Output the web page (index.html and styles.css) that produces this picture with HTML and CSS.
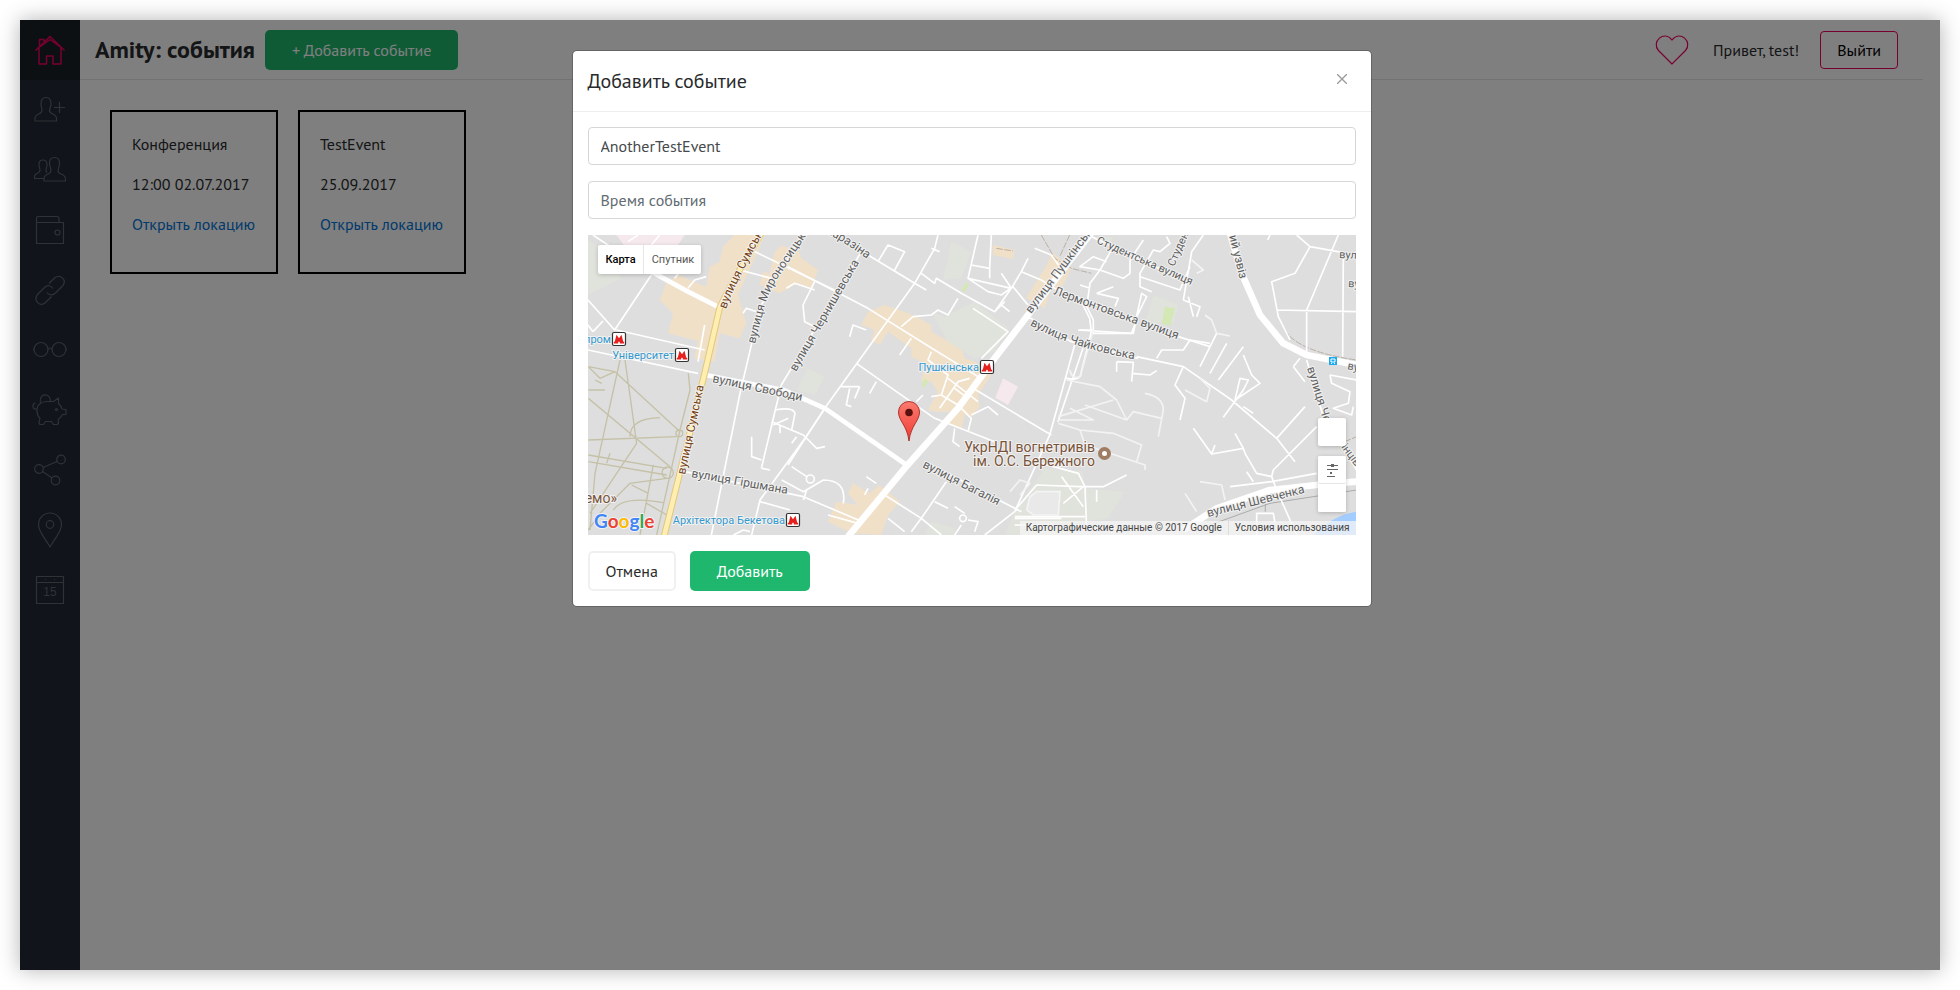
FILE: index.html
```html
<!DOCTYPE html>
<html lang="ru">
<head>
<meta charset="utf-8">
<title>Amity: события</title>
<link rel="stylesheet" href="styles.css">
</head>
<body>
<div class="app">
  <nav class="sidebar" aria-label="Разделы">
    <a class="nav-item active" href="#" aria-label="Главная"><svg class="icon" viewBox="0 0 32 32"><path d="M1.500 16.500 16 2.500l14.500 14M5 13.500V30h7.500v-8h6.500v8H27V13.500L16 5.500zM5.500 12.500V5.500h4.500v3"/></svg></a>
    <a class="nav-item" href="#" aria-label="Добавить друга"><svg class="icon" viewBox="0 0 32 32"><path d="M7 10c0-5 2-6.500 5-6.500S17 5 17 10c0 3-1.500 4-1.500 6.500 0 4.500 7 2.500 7 8V27H1v-2.500c0-5.500 7-3.500 7-8C8 14 7 13 7 10zM20 13.500h11M25.500 8v11"/></svg></a>
    <a class="nav-item" href="#" aria-label="Друзья"><svg class="icon" viewBox="0 0 32 32"><path d="M15.500 9c0-4 2-5.500 5-5.500s5 1.500 5 5.500-1.500 5-1.500 8c0 4 7.500 2 7.500 8v2H10v-2c0-6 7-4 7-8 0-3-1.500-4-1.500-8zM10 24.500H.5v-2c0-4 5.500-2.500 5.500-6 0-2-1-3-1-6C5 7 6.500 6 9 6s4 1 4 4.500c0 3-1 4-1 6 0 1 .5 1.700 1.200 2.200"/></svg></a>
    <a class="nav-item" href="#" aria-label="Кошелёк"><svg class="icon" viewBox="0 0 32 32"><path d="M2.500 8.500h27v21h-27V4.500q0-2 2-2H23q2 0 2 2v4"/><circle cx="23.500" cy="18.500" r="2.500"/></svg></a>
    <a class="nav-item" href="#" aria-label="Ссылки"><svg class="icon" viewBox="0 0 32 32"><path d="m15 9.500 5.500-5.500c5.500-5 13 2 8 8l-7 7c-3 3-7 2-8.500-.5M17.500 22.500l-6 6c-5.500 5-12.500-2-8-8l7-7c3-3 6.500-2 8.500 1"/></svg></a>
    <a class="nav-item" href="#" aria-label="Обзор"><svg class="icon wide" viewBox="0 0 36 32"><circle cx="9" cy="15.500" r="7"/><circle cx="27" cy="15.500" r="7"/><path d="M16 15.500q2-3 4 0M1 15.500h1M34 15.500h1"/></svg></a>
    <a class="nav-item" href="#" aria-label="Копилка"><svg class="icon wide" viewBox="0 0 36 32"><path d="M8.500 8.500C6.500-1.500 19-1.500 18.500 7.500M4.500 15c-5 1-4-6-1-6M5 17C4.500 11 9 7.500 15 7.500h6.500L26.500 4v5.500q3 2.500 3.500 5.500l4 .5v5h-3.500q-2 3.500-4 4.500c-1 2 1.500 5-1.500 5.500h-3.500l-2-3h-6l-2 3H8c-2-1-.5-3.500 0-6Q5 21.500 5 17z"/><circle cx="24.500" cy="15.500" r="1"/></svg></a>
    <a class="nav-item" href="#" aria-label="Поделиться"><svg class="icon" viewBox="0 0 32 32"><circle cx="5" cy="15" r="4.300"/><circle cx="27" cy="5.500" r="4.300"/><circle cx="21.500" cy="26.500" r="4.300"/><path d="m9 13.500 14-6M8.500 17.500l9.500 6.500"/></svg></a>
    <a class="nav-item" href="#" aria-label="Места"><svg class="icon tall" viewBox="0 0 32 36"><path d="M16 35C10 24 4.500 20 4.500 12.500a11.500 11.500 0 0 1 23 0C27.500 20 22 24 16 35z"/><circle cx="16" cy="12.500" r="3.800"/></svg></a>
    <a class="nav-item" href="#" aria-label="События"><svg class="icon" viewBox="0 0 32 32"><path d="M2.500 2.500h27v27h-27zM2.500 8.500h27M11 5.500h1M20 5.500h1"/><text class="icon-day" x="16" y="22" text-anchor="middle">15</text></svg></a>
  </nav>
  <div class="content">
    <header class="topbar">
      <h1 class="brand">Amity: события</h1>
      <button class="btn btn-green" type="button">+ Добавить событие</button>
      <div class="account">
        <svg class="heart" viewBox="0 0 34 31" aria-hidden="true"><path d="M17 30 3.500 16.500C-4 8 9-4.500 17 6 25-4.500 38 8 30.500 16.500z"/></svg>
        <span class="greeting">Привет, test!</span>
        <button class="btn btn-logout" type="button">Выйти</button>
      </div>
    </header>
    <main class="events">
      <article class="event"><p>Конференция</p><p>12:00 02.07.2017</p><p><a href="#">Открыть локацию</a></p></article>
      <article class="event"><p>TestEvent</p><p>25.09.2017</p><p><a href="#">Открыть локацию</a></p></article>
    </main>
  </div>

  <div class="backdrop">
    <section class="modal" role="dialog" aria-labelledby="modal-title">
      <header class="modal-head">
        <h2 id="modal-title">Добавить событие</h2>
        <button class="close" type="button" aria-label="Закрыть"><svg viewBox="0 0 10 10"><path d="M0 0 10 10M10 0 0 10"/></svg></button>
      </header>
      <form class="modal-body">
        <input class="field" type="text" aria-label="Название события" value="AnotherTestEvent">
        <input class="field" type="text" aria-label="Время события" placeholder="Время события">
        <div class="map">
          <svg class="map-canvas" viewBox="0 0 768 300" preserveAspectRatio="xMidYMid slice" role="img" aria-label="Карта">
            <defs>
              <g id="metro"><rect x="-6.500" y="-6.500" width="13" height="13" rx="1.500" fill="#fff" stroke="#333" stroke-width="1.200"/><path d="M-5.200 4.500V3l1-.5L-2.500-4.200 0-.8 2.500-4.200 4.200 2.500l1 .5v1.500H.8V3.200L0 2.500l-.8.7v1.300z" fill="#e5211f"/></g>
              <path id="st-mironosytska" d="M167 109 176 74Q181 55 192 40L228-14"/>
              <path id="st-chaikovska" d="M442 90Q480 112 550 125"/>
              <path id="st-karazina" d="M190-22Q240-6 279 24"/>
              <path id="st-sumska" d="M138 74Q148 45 190-28"/>
              <linearGradient id="pin" x1="0" y1="0" x2="0" y2="1"><stop offset="0" stop-color="#fb7a6f"/><stop offset="1" stop-color="#f03c34"/></linearGradient>
            </defs>
            <rect width="768" height="300" fill="#dedede"/>
            <g transform="scale(.33333)">
              <g class="commercial">
                <path d="M440 0H530L500 70 450 180 475 265 455 310 395 295 380 380 320 370 330 318 240 295 255 235 215 195 235 145 270 120 355 155 365 95 395 80 405 35zM560 50 580 32 610 40 625 25 640 70 690 105 670 160 630 145 575 175 515 150 525 110 545 115z"/>
                <path transform="translate(600)" d="M240 230 290 210 375 240 430 270 430 290 520 340 530 370 560 380 610 420 570 480 575 515 550 545 530 540 520 582 480 565 490 530 440 530 420 525 450 470 430 440 400 440 410 385 370 365 370 340 300 290 275 330 250 315 260 285 220 270zM615 30 680 45 675 72 615 60zM790 50 850 100 815 170 790 160 770 220 715 190 745 140 780 85zM195 745 245 775 275 750 335 800 300 840 280 900 190 895 120 860 145 800 210 810 180 775z"/>
              </g>
              <g class="park">
                <path d="M0 15 40 40 100 130 0 180z"/>
                <path transform="translate(600)" d="M490 20 550 50 520 130 465 135zM430 230 470 245 560 200 660 280 620 350 560 370 480 320zM60 400 110 425 80 480 25 465zM770 700 885 710 890 760 1010 770 960 850 890 860 820 900H650L680 830zM430 860 500 880 500 900H410z"/>
                <path transform="translate(1146 -585)" d="M550 765 625 795 610 850 525 850zM375 590 430 590 425 605 370 600z"/>
              </g>
              <path class="hospital" d="M85 0H290L240 75 130 60zM1245 430 1290 455 1260 510 1222 488z"/>
              <path class="grass" d="M1120 165 1135 140 1142 152 1128 172zM1000 450 1010 430 1022 438 1008 458zM1731 215 1761 220 1746 273 1721 265z"/>
              <path class="water" d="M2176 900Q2236 840 2306 830V900z"/>
              <path class="rail" d="M1866 870 2046 805 2306 765M2032 792V830"/>
              <g class="footway" transform="translate(-54 285)">
                <path d="M55 110 135 125 330 305M150 90 75 430 60 600M165 90 200 340M55 205 300 410M55 330 320 320M55 375 290 415M55 395 290 435M290 445 180 460 90 550 55 600M355 130 360 180 330 300 260 615M180 320Q180 265 270 263M135 125 90 145 55 110M200 340 60 550M55 180H105M120 370 110 400M185 465 235 490M250 405 210 615M130 540Q160 495 280 518M75 150 95 160M230 520 290 555"/>
                <circle cx="293" cy="428" r="17"/><circle cx="328" cy="310" r="10"/>
              </g>
              <path class="track" d="M1360 0 1400 70 1450 100 1510 115M1445 0 1415 65M1225 40 1275 48M2090 285Q2130 350 2306 375M2270 620 2306 605"/>
              <g class="minor">
                <path d="M0 195 80 285 190 120M15 0 75 40M85 285 350 345M0 345 330 415M15 290 45 258M0 270 15 290M300 160 320 135 355 125M480 40 625 110 750 170M455 105 550 130M595 160 620 145 680 165M680 140 645 210 650 260 680 275M465 235 475 220 520 235M260 130 275 110M640 0 520 210 490 330 455 480 370 900M820 50 580 450 520 700M190 30 215 0M120 20 150 0M350 270 330 380"/>
                <path transform="translate(-54 285)" d="M765 235 705 325 570 510 545 615M345 425 700 500 865 570M570 515 660 540M605 275 700 315 740 355 765 350M615 240Q670 230 675 250L665 300M610 285 655 265M630 285V310M545 320V380L575 390M575 415 600 420M665 410 710 440M635 450 700 485 760 450Q830 450 820 520M700 510 710 480M665 340 680 320M490 615 520 600 540 605"/>
                <g transform="translate(600)">
                  <path d="M0 95 240 220 440 345 570 425M240 60 380 145 415 165M270 80 300 30 350 50 320 105M450 0 440 40 380 145 110 520 0 690M400 115 440 145 445 130 520 175 620 230 650 200M375 245 430 240 450 225 480 240 510 190M375 245 340 275M430 40 455 50M570 0 540 130 600 170 640 180 675 155 720 210M550 90 605 100V130M540 130 670 160 700 110 720 70M610 0 605 100M640 115 670 160 620 230M640 210 665 230M555 220 660 290 580 370M430 350 420 375 480 420 460 480 430 485M370 310 335 360M205 385 440 550 620 620M265 440 245 475M160 455 215 455M185 460 175 510 190 515M215 455 200 490M385 500 405 480"/>
                  <path d="M555 460 790 600M515 515 550 550 540 590M550 540 600 515 630 540M455 520 510 440 545 430M480 430 570 500M460 480 510 510M500 460 540 490M500 580 495 620 515 635M410 680 700 830M740 40 790 60 815 95M700 110 760 135 800 160 1050 260M720 245 850 320 1050 370M860 330 785 600 680 830 590 900M885 340 810 560M835 430Q880 440 880 410L910 290 905 250 880 200M870 285 1030 295M1030 295 1045 260M185 305 195 270 235 285M235 725 265 745M230 780 240 760M290 780 400 850 370 890M400 850 460 900M475 740 400 850M440 800 480 820M500 815 530 835M540 855 570 860 560 890M300 850 350 890M120 840 210 865M520 870 500 900M680 850H820M680 870H800"/>
                  <circle cx="525" cy="850" r="10"/><circle cx="67" cy="732" r="12"/>
                </g>
                <path transform="translate(1146 285)" d="M500 80 640 110 785 210 920 325 975 395M640 110 615 165 645 205 630 270M440 95 490 97 485 155M440 95V125M485 130 540 135 560 122M560 85 575 60 640 60 660 30 720 40M690 110 740 10M720 130 770 40M745 150 820 50M760 262 820 180 835 150 810 145 795 210M795 210 870 160 845 135 820 75M820 230 850 250M1005 230 920 325M1040 290 910 420 905 440 860 430 825 370 820 355 795 310M820 355 725 372 670 295M725 372 735 345M905 440 920 480 980 615M780 470 905 455 1040 430M830 425 850 455M1010 90 1060 260 1110 340 1160 420M970 110 990 85M970 110 1005 155M1080 135 1085 160 1140 185 1135 220 1090 235 1145 255 1150 230M1080 135 1160 150M860 615V550H910L915 580M135 540 200 465 330 470 400 470 470 435M345 470 350 600M135 560H345M340 470 280 520M275 440 340 530M380 480V515M215 400 325 430 345 470"/>
                <path transform="translate(1146 -585)" d="M365 590 430 620 660 730M700 585 665 635 640 780M590 590 600 610 570 635 550 630 510 700V740L545 755M510 710 630 750 660 680M520 600 480 660V700L460 715 390 690 330 680 370 650 410 665M430 620 390 690 360 730 350 800 370 840V880H490L500 830 530 770 515 760 495 850M330 870H370M380 760 430 740M380 760 445 775 435 800M330 735 360 745M640 780 690 800 680 830M655 770 670 830M980 585 1020 620 1160 645M1020 620 975 700 905 725 925 830 960 900M1105 585 1010 810V950M920 810 1160 815M1120 650 1118 950M900 585 893 600M625 890 720 920"/>
              </g>
              <path class="lane" transform="translate(1146 285)" d="M290 150 390 170 440 210 470 270M300 235 370 270 265 270M265 260 430 210M345 225 470 270M525 190Q580 200 580 240L565 320M470 270 490 245 575 265M265 280 330 300 430 310 515 345 500 395M330 300 345 345 525 405V420M645 180 710 215 720 175 690 145M690 455 755 465 765 510M645 490 680 545M705-45 725-30 740 10 780 18M665-210 700-180 680-170M120 485 150 450 180 460 150 495M300 120Q305 150 330 140L370 0"/>
              <path class="building" d="M1326 785 1346 770H1416L1411 840H1336L1316 825z"/>
              <path class="major" d="M190 110 300 170 395 218M341 418 586 465 711 520 956 690"/>
              <path class="avenue" d="M1520-20 1320 240 1220 370 1110 520 950 700 780 905M1786 885 1886 820 2046 765 2186 750 2306 740M1926-5 1961 115 2016 240 2086 325 2156 360 2306 390"/>
              <path class="yellow-edge" d="M520-5 440 130 395 218 350 415 228 905"/>
              <path class="yellow" d="M520-5 440 130 395 218 350 415 228 905"/>
            </g>
            <g class="street">
              <text><textPath href="#st-mironosytska">вулиця Мироносицька</textPath></text>
              <text text-anchor="end"><textPath href="#st-karazina" startOffset="100%">улиця Каразіна</textPath></text>
              <text><textPath href="#st-chaikovska">вулиця Чайковська</textPath></text>
              <text transform="translate(208 137) rotate(-60)">вулиця Чернишевська</text>
              <text transform="translate(124 147) rotate(12)">вулиця Свободи</text>
              <text transform="translate(103 242) rotate(10)">вулиця Гіршмана</text>
              <text transform="translate(334 232) rotate(27)">вулиця Багалія</text>
              <text transform="translate(443 79) rotate(-53)">вулиця Пушкінська</text>
              <text transform="translate(465 59) rotate(20)">Лермонтовська вулиця</text>
              <text class="small" transform="translate(508 8) rotate(24)">Студентська вулиця</text>
              <text class="small" transform="translate(586 32) rotate(-66)">Студентська</text>
              <text transform="translate(641 1) rotate(76)">ий узвіз</text>
              <text class="small" transform="translate(751 23) rotate(3)">вулиця</text>
              <text class="small" transform="translate(760 52) rotate(3)">вулиця</text>
              <text transform="translate(719 133) rotate(73)">вулиця Чер</text>
              <text class="small" transform="translate(759 134) rotate(12)">вулиця</text>
              <text class="small" transform="translate(753 212) rotate(54)">інців</text>
              <text transform="translate(620 282) rotate(-14)">вулиця Шевченка</text>
            </g>
            <g class="street highway">
              <text><textPath href="#st-sumska">вулиця Сумська</textPath></text>
              <text transform="translate(97 240) rotate(-78)">вулиця Сумська</text>
            </g>
            <g class="station">
              <text x="23" y="108" text-anchor="end">Держпром</text>
              <text x="86" y="124" text-anchor="end">Університет</text>
              <text x="391" y="136" text-anchor="end">Пушкінська</text>
              <text x="197" y="289" text-anchor="end">Архітектора Бекетова</text>
            </g>
            <use href="#metro" x="31" y="104"/><use href="#metro" x="94" y="120"/><use href="#metro" x="399" y="132"/><use href="#metro" x="205" y="285"/>
            <g class="place">
              <text x="29" y="268" text-anchor="end">емо»</text>
              <text x="507" y="217" text-anchor="end">УкрНДІ вогнетривів</text>
              <text x="507" y="231" text-anchor="end">ім. О.С. Бережного</text>
            </g>
            <circle cx="516.500" cy="218.500" r="4.500" fill="#fff" stroke="#a07c62" stroke-width="4"/>
            <path d="M741 122h8v8h-8z" fill="#1aaaf0"/><path d="M743 124h4v3h-4zM743 129l1-1M747 129l-1-1" fill="none" stroke="#fff"/>
            <path d="M321 206C319 190 310.500 186 310.500 177a10.500 10.500 0 0 1 21 0C331.500 186 323 190 321 206z" fill="url(#pin)" stroke="#b0342e"/>
            <circle cx="321" cy="177.500" r="3.800" fill="#5a100e"/>
            <text class="google" x="6" y="293"><tspan fill="#4285f4">G</tspan><tspan fill="#ea4335">o</tspan><tspan fill="#fbbc05">o</tspan><tspan fill="#4285f4">g</tspan><tspan fill="#34a853">l</tspan><tspan fill="#ea4335">e</tspan></text>
          </svg>
          <div class="map-types"><button class="selected" type="button">Карта</button><button type="button">Спутник</button></div>
          <div class="map-tools">
            <button class="map-tool" type="button" aria-label="Просмотр улиц"></button>
            <div class="zoom">
              <button class="map-tool" type="button" aria-label="Увеличить"><svg viewBox="0 0 14 14"><path d="M2 2.500h11M2 6.500h11M2 13.500h8"/><path d="M6 1h3v3H6zM5 9h2v2H5z" class="knob"/></svg></button>
              <button class="map-tool" type="button" aria-label="Уменьшить"></button>
            </div>
          </div>
          <div class="map-credit"><span>Картографические данные © 2017 Google</span><a href="#">Условия использования</a></div>
        </div>
        <div class="actions">
          <button class="btn btn-plain" type="button">Отмена</button>
          <button class="btn btn-green" type="submit">Добавить</button>
        </div>
      </form>
    </section>
  </div>
</div>
</body>
</html>
```
FILE: styles.css
```css
* { box-sizing: border-box; }

body {
  margin: 0;
  padding: 20px;
  min-height: 100vh;
  display: flex;
  background: #fff;
  color: #292b2c;
  font: 16px/24px "PT Sans", Roboto, "Noto Sans", sans-serif;
}

h1, h2, p { margin: 0; }
button, input { font: inherit; }
button { cursor: pointer; }
a { color: #0275d8; text-decoration: none; }

.app {
  position: relative;
  flex: 1;
  display: flex;
  background: #fff;
  box-shadow: 0 0 20px rgba(0, 0, 0, .3);
}

/* Sidebar */
.sidebar { width: 60px; background: #222836; }
.nav-item {
  height: 60px;
  display: flex;
  align-items: center;
  justify-content: center;
  color: #5c666c;
}
.nav-item.active { background: #1a2026; color: #f0005f; }
.icon {
  width: 32px;
  height: 32px;
  fill: none;
  stroke: currentColor;
  stroke-width: 1.2;
  stroke-linejoin: round;
}
.active .icon { stroke-width: 1.5; }
.icon.wide { width: 36px; }
.icon.tall { height: 36px; }
.icon-day { font: 12px "Liberation Sans", sans-serif; fill: currentColor; stroke: none; }

/* Page */
.content { flex: 1; padding-right: 17px; }
.topbar {
  height: 60px;
  padding: 0 25px 0 15px;
  display: flex;
  align-items: center;
  gap: 10px;
  border-bottom: 1px solid #e4e4e4;
}
.brand { font-size: 24px; font-weight: 700; }
.account { margin-left: auto; display: flex; align-items: center; gap: 20px; }
.heart { width: 34px; height: 31px; margin-right: 4px; fill: none; stroke: #f0005f; stroke-width: 1.2; }
.greeting { padding-left: 2px; white-space: nowrap; }
.account .greeting { padding: 0 1px 0 0; }

.btn {
  height: 40px;
  padding: 0 27px;
  border: 0;
  border-radius: 5px;
}
.btn-green { background: #1eb76d; color: #fff; }
.btn-logout {
  height: 38px;
  padding: 0 16px;
  background: #fff;
  border: 1px solid #f0005f;
  border-radius: 4px;
  color: #000;
}
.btn-plain {
  padding: 0 16px;
  background: #fff;
  border: 2px solid #f0f0f0;
  color: #292b2c;
}

.events { padding: 30px; display: flex; gap: 20px; }
.event { min-width: 168px; padding: 20px; border: 2px solid #000; }
.event p { margin-bottom: 16px; }

/* Dialog */
.backdrop {
  position: absolute;
  inset: 0;
  padding: 30px 17px 0 0;
  background: rgba(0, 0, 0, .5);
}
.modal {
  max-width: 800px;
  margin: 0 auto;
  background: #fff;
  background-clip: padding-box;
  border: 1px solid rgba(0, 0, 0, .2);
  border-radius: 5px;
}
.modal-head {
  padding: 15px;
  display: flex;
  align-items: center;
  justify-content: space-between;
  border-bottom: 1px solid #eceeef;
}
.modal-head h2 { font-size: 20px; line-height: 30px; font-weight: 400; }
.close { padding: 8px 9px 12px; border: 0; background: none; line-height: 0; }
.close svg { width: 10px; height: 10px; stroke: #999; stroke-width: 1.3; fill: none; }

.modal-body { padding: 15px; display: flex; flex-direction: column; gap: 16px; }
.field {
  width: 100%;
  height: 38px;
  padding: 0 12px;
  border: 1px solid #d5d6d7;
  border-radius: 4px;
  background: #fff;
  color: #464a4c;
}
.field::placeholder { color: #636c72; opacity: 1; }
.actions { display: flex; gap: 14px; }

/* Map */
.map { position: relative; overflow: hidden; font-family: Roboto, sans-serif; }
.map-canvas { display: block; width: 100%; height: 300px; }
.commercial { fill: #f0e0c8; }
.park { fill: #e0e3dc; }
.hospital { fill: #f6e9ee; }
.grass { fill: #d3e8b5; }
.water { fill: #a3ccff; }
.building { fill: #e9e9e9; stroke: #f4f4f4; stroke-width: 5; }
.rail, .footway, .track, .minor, .lane, .major, .avenue, .yellow, .yellow-edge {
  fill: none;
  stroke: #fff;
  stroke-linejoin: round;
}
.rail { stroke: #ababab; stroke-width: 3; }
.footway { stroke: #c5c1a7; stroke-width: 4; }
.track { stroke: #b9b0a6; stroke-width: 3; stroke-dasharray: 20 4; }
.minor { stroke-width: 5; }
.lane { stroke: #f3f3f3; stroke-width: 5; }
.major { stroke-width: 14; }
.avenue { stroke-width: 20; }
.yellow-edge { stroke: #e0c87c; stroke-width: 20; }
.yellow { stroke: #ffeeb0; stroke-width: 14; }
.street text, .station text, .place text, .google {
  paint-order: stroke;
  stroke: #f2f2f2;
  stroke-width: 2px;
  stroke-linejoin: round;
}
.street { font-size: 12px; fill: #5f5f5f; }
.street .small { font-size: 11px; }
.highway { fill: #77400f; }
.station { font-size: 11px; fill: #3598cc; }
.place { font-size: 14px; fill: #7a5439; }
.google { font: 700 19px Lato, Roboto, sans-serif; }

.map-types {
  position: absolute;
  top: 10px;
  left: 10px;
  display: flex;
  background: #fff;
  border-radius: 2px;
  box-shadow: 0 1px 4px rgba(0, 0, 0, .2);
}
.map-types button {
  height: 29px;
  padding: 0 7px 0 8px;
  border: 0;
  background: none;
  font-size: 11px;
  color: #565656;
}
.map-types .selected { border-right: 1px solid #e6e6e6; font-weight: 500; color: #000; }
.map-tools {
  position: absolute;
  right: 10px;
  bottom: 23px;
  display: flex;
  flex-direction: column;
  gap: 10px;
}
.map-tool {
  display: flex;
  align-items: center;
  justify-content: center;
  width: 28px;
  height: 28px;
  padding: 0;
  border: 0;
  border-radius: 2px;
  background: #fff;
}
.map-tools > .map-tool, .zoom { box-shadow: 0 1px 4px rgba(0, 0, 0, .2); }
.map-tool svg { width: 14px; height: 14px; fill: none; stroke: #666; }
.map-tool .knob { fill: #666; stroke: none; }
.zoom { border-radius: 2px; background: #fff; }
.zoom .map-tool:first-child { border-bottom: 1px solid #e6e6e6; }
.map-credit {
  position: absolute;
  right: 0;
  bottom: 0;
  display: flex;
  background: rgba(245, 245, 245, .75);
  font-size: 10px;
  line-height: 14px;
  color: #444;
}
.map-credit > * { padding: 0 6px; color: #444; }
.map-credit span { border-right: 1px solid #ddd; }
```
